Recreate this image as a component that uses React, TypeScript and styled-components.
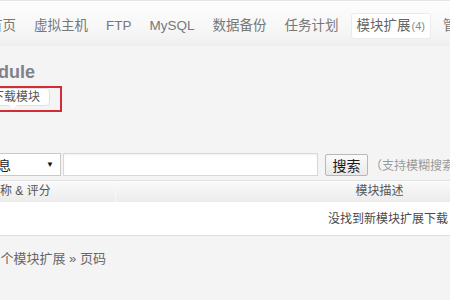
import React from "react";
import styled, { createGlobalStyle } from "styled-components";

const Global = createGlobalStyle`
  html, body {
    margin: 0;
    padding: 0;
    width: 450px;
    height: 300px;
    overflow: hidden;
    background: #f4f4f4;
  }
  body {
    font-family: "Liberation Sans", "Noto Sans CJK SC", sans-serif;
  }
  * { box-sizing: border-box; }
`;

const Page = styled.div`
  width: 450px;
  height: 300px;
  overflow: hidden;
  display: flex;
  flex-direction: column;
`;

const TabBar = styled.nav`
  height: 46px;
  flex: none;
  display: flex;
  align-items: flex-start;
  padding-top: 12px;
  margin-left: -20px;
  border-top: 1px solid #e6e6e6;
  background: linear-gradient(#fdfdfd, #f7f7f7 60%, #efefef);
  white-space: nowrap;
`;

const Tab = styled.a<{ $active?: boolean }>`
  flex: none;
  height: 26px;
  line-height: 24px;
  padding: 0 5px;
  margin: 0 3px;
  font-size: 13.5px;
  color: ${(p) => (p.$active ? "#666" : "#777")};
  border-radius: 3px;
  border: 1px solid ${(p) => (p.$active ? "#ebebeb" : "transparent")};
  background: ${(p) => (p.$active ? "#fff" : "transparent")};
  text-decoration: none;
`;

const Count = styled.span`
  font-size: 11px;
  color: #888;
  margin-left: 1px;
`;

const Heading = styled.h2`
  flex: none;
  margin: 15px 0 0 -28px;
  font-size: 18px;
  line-height: 22px;
  font-weight: bold;
  color: #80818a;
`;

const Highlight = styled.div`
  flex: none;
  margin: 3px 0 0 -20px;
  width: 82px;
  height: 26px;
  border: 2px solid #d42c36;
  display: flex;
  align-items: flex-start;
`;

const Bubble = styled.span`
  position: relative;
  height: 18px;
  line-height: 16px;
  padding: 0 9px;
  font-size: 12px;
  color: #555;
  background: #fff;
  border: 1px solid #e0e0e0;
  border-radius: 4px;
  white-space: nowrap;

  &::after {
    content: "";
    position: absolute;
    left: 26px;
    top: 100%;
    border-left: 4px solid transparent;
    border-right: 4px solid transparent;
    border-top: 4px solid #fff;
  }
`;

const SearchRow = styled.div`
  flex: none;
  margin: 41px 0 0 -46px;
  display: flex;
  align-items: center;
  white-space: nowrap;
  & > * { flex: none; }
`;

const Select = styled.div`
  width: 107px;
  height: 23px;
  display: flex;
  align-items: center;
  justify-content: space-between;
  padding: 0 6px 0 4px;
  background: #fff;
  border: 1px solid #c9c9c9;
  font-size: 13px;
  color: #222;
`;

const Caret = styled.span`
  font-size: 8px;
  color: #111;
`;

const Input = styled.div`
  width: 255px;
  height: 23px;
  margin-left: 2px;
  background: #fff;
  border: 1px solid #d8d8d8;
  box-shadow: inset 0 1px 2px rgba(0, 0, 0, 0.06);
`;

const Button = styled.button`
  width: 43px;
  height: 22px;
  margin-left: 7px;
  padding: 0;
  font-family: inherit;
  font-size: 14px;
  color: #1a1a1a;
  background: linear-gradient(#fbfbfb, #e9e9e9);
  border: 1px solid #b8b8b8;
  border-radius: 2px;
`;

const Help = styled.span`
  margin-left: 2px;
  font-size: 12px;
  color: #9a9a9a;
`;

const Table = styled.div`
  margin: 4px 0 0 -21px;
  width: 818px;
  display: grid;
  grid-template-columns: 136px 520px 162px;
  flex: none;
`;

const HeadCell = styled.div<{ $center?: boolean }>`
  height: 22px;
  line-height: 21px;
  padding-left: 8px;
  font-size: 12px;
  color: #555;
  text-align: ${(p) => (p.$center ? "center" : "left")};
  background: linear-gradient(#fafafa, #ececec);
  border-top: 1px solid #e2e2e2;
  border-left: 1px solid #f7f7f7;
`;

const EmptyCell = styled.div`
  grid-column: 1 / -1;
  height: 34px;
  line-height: 34px;
  text-align: center;
  font-size: 12px;
  color: #4a4a4a;
  background: #fff;
  border-bottom: 1px solid #dedede;
`;

const Footer = styled.div`
  flex: none;
  margin: 13px 0 0 -27px;
  line-height: 20px;
  font-size: 13px;
  color: #666;
  white-space: nowrap;
`;

export default function App() {
  const tabs = ["首页", "虚拟主机", "FTP", "MySQL", "数据备份", "任务计划"];
  return (
    <Page>
      <Global />
      <TabBar>
        {tabs.map((t) => (
          <Tab key={t}>{t}</Tab>
        ))}
        <Tab $active>
          模块扩展<Count>(4)</Count>
        </Tab>
        <Tab>管理</Tab>
      </TabBar>
      <Heading>Module</Heading>
      <Highlight>
        <Bubble>下载模块</Bubble>
      </Highlight>
      <SearchRow>
        <Select>
          <span>模块信息</span>
          <Caret>▼</Caret>
        </Select>
        <Input />
        <Button>搜索</Button>
        <Help>（支持模糊搜索）</Help>
      </SearchRow>
      <Table>
        <HeadCell>名称 &amp; 评分</HeadCell>
        <HeadCell $center>模块描述</HeadCell>
        <HeadCell $center>操作</HeadCell>
        <EmptyCell>没找到新模块扩展下载</EmptyCell>
      </Table>
      <Footer>共 0 个模块扩展 » 页码</Footer>
    </Page>
  );
}
